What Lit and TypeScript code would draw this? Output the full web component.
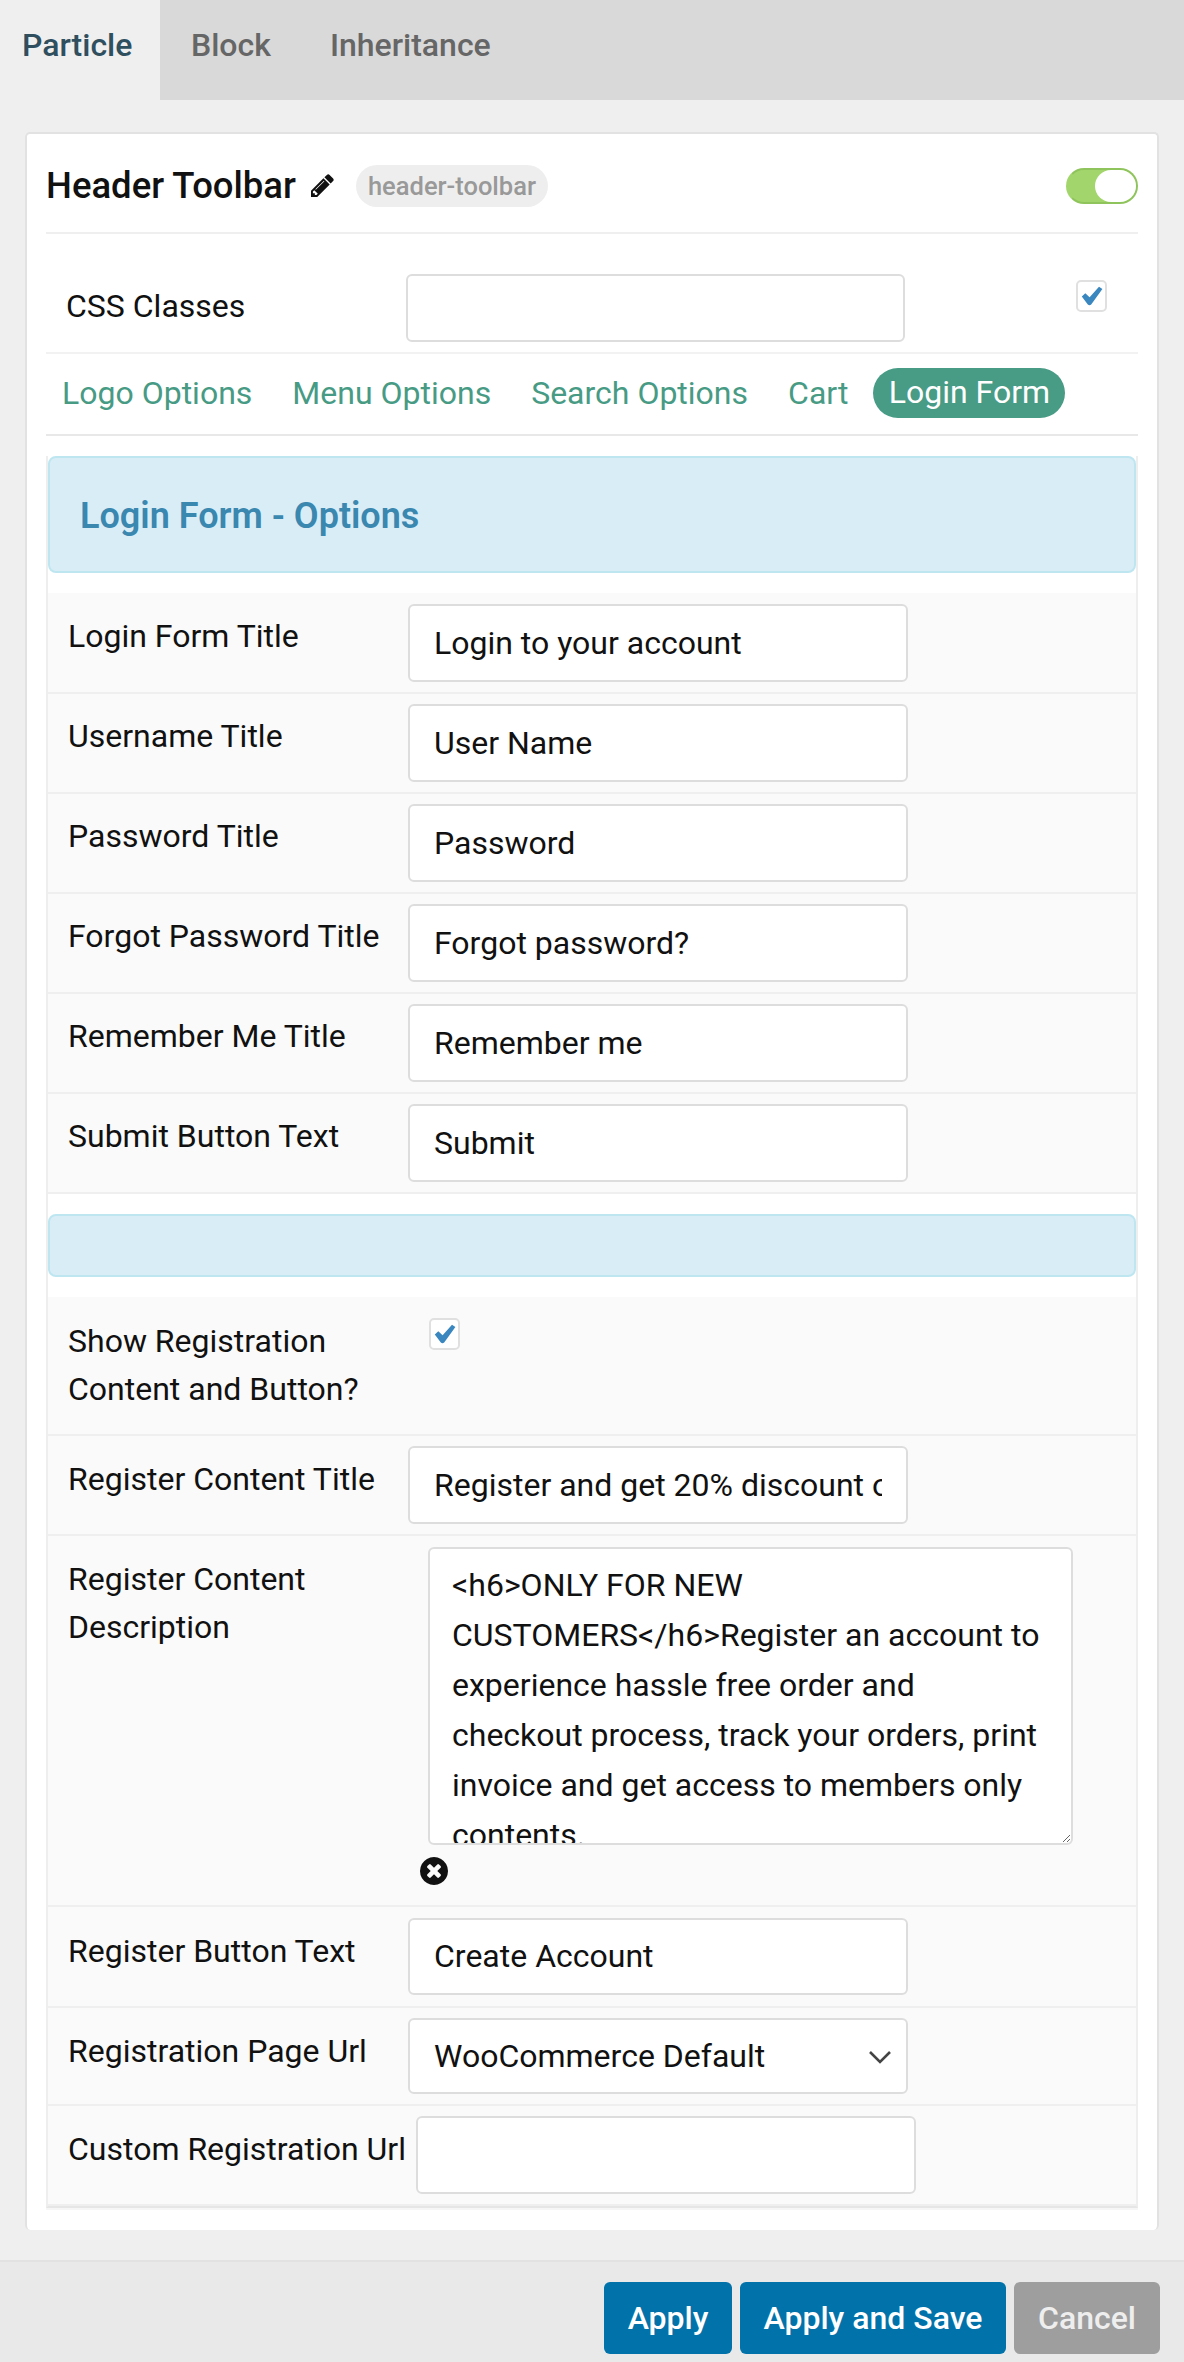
import { LitElement, html, css } from "lit";
import { customElement } from "lit/decorators.js";

const checkIcon = html`<svg class="check" viewBox="0 0 22 20"><path d="M0.8 10.5 L4.3 7.2 L8.6 11.2 L18 0.8 L21.4 3 L10.2 18.4 Q8.4 20 6.8 18.4 Z" fill="#3a87c0"/></svg>`;

const rowsA = [
  ["Login Form Title", "Login to your account"],
  ["Username Title", "User Name"],
  ["Password Title", "Password"],
  ["Forgot Password Title", "Forgot password?"],
  ["Remember Me Title", "Remember me"],
  ["Submit Button Text", "Submit"],
];

@customElement("app-root")
export class AppRoot extends LitElement {
  static styles = css`
    :host {
      display: block;
      width: 1184px;
      height: 2362px;
      background: #efefef;
      font-family: Roboto, "Liberation Sans", sans-serif;
      font-size: 32px;
      color: #111;
      overflow: hidden;
    }
    * { box-sizing: border-box; }
    .tabs {
      display: flex;
      height: 100px;
      background: #d9d9d9;
      font-size: 32px;
      font-weight: 500;
      color: #666;
    }
    .tab { padding: 24px 29px 0; line-height: 42px; }
    .tab.active { background: #efefef; color: #2f4f5f; padding: 24px 22px 0; width: 160px; }
    .tab.second { padding-left: 31px; }
    .tab.third { padding-left: 30px; }
    .card {
      margin: 32px 25px 0;
      height: 2098px;
      background: #fff;
      border: 2px solid #e2e2e2;
      border-bottom: none;
      border-radius: 5px;
      padding: 0 19px;
    }
    .head {
      display: flex;
      align-items: center;
      height: 100px;
      padding-top: 5px;
      border-bottom: 2px solid #efefef;
    }
    .title { font-size: 36.5px; font-weight: 500; color: #111; }
    .pencil { width: 23px; height: 23px; margin: 0 0 0 15px; flex: none; }
    .chip {
      margin-left: 22px;
      height: 42px;
      padding: 0 12px;
      border-radius: 21px;
      background: #eee;
      color: #999;
      font-size: 25.5px;
      font-weight: 500;
      line-height: 42px;
    }
    .toggle {
      margin-left: auto;
      width: 72px;
      height: 36px;
      border-radius: 18px;
      background: #a2d66c;
      border: 2px solid #8fc45c;
      border-left-color: #a2d66c;
      display: flex;
      justify-content: flex-end;
    }
    .knob { width: 41px; height: 32px; border-radius: 16px; background: #fff; }
    .css-row {
      display: flex;
      align-items: flex-start;
      height: 120px;
      border-bottom: 2px solid #f2f2f2;
      padding: 40px 0 0 20px;
    }
    .css-row .lbl { width: 340px; padding-top: 8px; }
    .css-row .field { width: 499px; height: 68px; }
    .cb {
      width: 31px;
      height: 32px;
      border: 2px solid #e0e0e0;
      border-radius: 5px;
      background: #fff;
      display: flex;
      align-items: center;
      justify-content: center;
      flex: none;
    }
    .check { width: 22px; height: 20px; }
    .css-row .cb { margin: 6px 0 0 171px; }
    .subtabs {
      display: flex;
      align-items: center;
      height: 82px;
      border-bottom: 2px solid #e8e8e8;
      color: #479b84;
      font-size: 32px;
      padding: 0 0 2px 16px;
    }
    .subtab { margin-right: 40px; white-space: nowrap; }
    .subtab.cart { margin-right: 25px; }
    .subtab.active {
      background: #489b85;
      color: #fff;
      border-radius: 25px;
      height: 50px;
      line-height: 48px;
      text-align: center;
      margin: 0;
      width: 192px;
    }
    .panel {
      margin-top: 20px;
      border-left: 2px solid #eee;
      border-right: 2px solid #eee;
      border-bottom: 2px solid #e6e6e6;
      box-shadow: 0 2px 0 #f6f6f6;
      height: 1752px;
    }
    .banner {
      height: 117px;
      background: #d9edf7;
      border: 2px solid #bde6f1;
      border-radius: 8px;
      color: #3a87b0;
      font-size: 36px;
      font-weight: 600;
      padding: 2px 30px 0;
      display: flex;
      align-items: center;
    }
    .banner.first { margin: 0 0 20px 0; }
    .banner.empty { height: 63px; margin: 20px 0; }
    .row {
      display: flex;
      align-items: flex-start;
      height: 100px;
      background: #fafafa;
      border-bottom: 2px solid #efefef;
      padding-top: 10px;
    }
    .row.top { height: 101px; padding-top: 11px; }
    .row.short .field { height: 77px; padding-bottom: 2px; }
    .row.sel { height: 98px; }
    .lbl {
      line-height: 48px;
      white-space: nowrap;
    }
    .row .lbl {
      padding: 8px 10px 0 20px;
      min-width: 360px;
    }
    .lower .row .lbl { padding-top: 9px; }
    .field {
      width: 500px;
      height: 78px;
      border: 2px solid #ddd;
      border-radius: 6px;
      background: #fff;
      font: 32px Roboto, "Liberation Sans", sans-serif;
      color: #111;
      padding: 0 24px;
      margin: 0;
      outline: none;
      flex: none;
    }
    .selwrap { position: relative; width: 500px; height: 76px; flex: none; }
    .selwrap .field { appearance: none; -webkit-appearance: none; height: 76px; display: block; }
    .chev { position: absolute; right: 17px; top: 31px; width: 22px; height: 16px; }
    .row.reg { height: 139px; padding-top: 21px; }
    .reg .cb { margin-left: 21px; }
    .lower .reg .lbl { white-space: normal; width: 360px; margin-top: -1px; padding-top: 0; }
    .row.area { height: 371px; padding-top: 11px; }
    .area .lbl { white-space: normal; width: 380px; min-width: 380px; }
    .lower .area .lbl { padding-top: 8px; }
    .areacol { width: 646px; flex: none; position: relative; }
    .areafield {
      display: block;
      width: 645px;
      height: 298px;
      border: 2px solid #ddd;
      border-radius: 6px;
      background: #fff;
      font: 32px/50px Roboto, "Liberation Sans", sans-serif;
      color: #111;
      padding: 11px 22px 0;
      margin: 0;
      outline: none;
      resize: both;
      overflow: hidden;
    }
    .x { position: absolute; left: -8px; top: 310px; width: 28px; height: 28px; }
    .footer {
      height: 102px;
      margin-top: 30px;
      border-top: 2px solid #e2e2e2;
      background: #e9e9e9;
      display: flex;
      justify-content: flex-end;
      gap: 8px;
      padding: 20px 24px 0 0;
    }
    .btn {
      height: 72px;
      border-radius: 6px;
      background: #0273aa;
      color: #fff;
      font-size: 32px;
      font-weight: 500;
      display: flex;
      align-items: center;
      justify-content: center;
    }
    .apply { width: 128px; }
    .save { width: 266px; }
    .btn.cancel { width: 146px; background: #9e9e9e; color: #eee; }
  `;

  private row(label: string, value: string, cls = "") {
    return html`<div class="row ${cls}">
      <div class="lbl">${label}</div>
      <input class="field" .value=${value} />
    </div>`;
  }

  render() {
    return html`
      <div class="tabs">
        <div class="tab active">Particle</div>
        <div class="tab second">Block</div>
        <div class="tab third">Inheritance</div>
      </div>
      <div class="card">
        <div class="head">
          <div class="title">Header Toolbar</div>
          <svg class="pencil" viewBox="128 128 1536 1536"><path fill="#111" d="M491 1536l91-91-235-235-91 91v107h128v128h107zm523-928q0-22-22-22-10 0-17 7l-542 542q-7 7-7 17 0 22 22 22 10 0 17-7l542-542q7-7 7-17zm-54-192l416 416-832 832h-416v-416zm683 96q0 53-37 90l-166 166-416-416 166-165q36-38 90-38 53 0 91 38l235 234q37 39 37 91z"/></svg>
          <div class="chip">header-toolbar</div>
          <div class="toggle"><div class="knob"></div></div>
        </div>
        <div class="css-row">
          <div class="lbl">CSS Classes</div>
          <input class="field" />
          <div class="cb">${checkIcon}</div>
        </div>
        <div class="subtabs">
          <div class="subtab">Logo Options</div>
          <div class="subtab">Menu Options</div>
          <div class="subtab">Search Options</div>
          <div class="subtab cart">Cart</div>
          <div class="subtab active">Login Form</div>
        </div>
        <div class="panel">
          <div class="banner first">Login Form - Options</div>
          ${rowsA.map(([l, v], i) => this.row(l, v, i === 0 ? "top" : ""))}
          <div class="banner empty"></div>
          <div class="lower">
            <div class="row reg">
              <div class="lbl">Show Registration Content and Button?</div>
              <div class="cb">${checkIcon}</div>
            </div>
            ${this.row("Register Content Title", "Register and get 20% discount on your first order")}
            <div class="row area">
              <div class="lbl">Register Content Description</div>
              <div class="areacol">
                <textarea class="areafield" .value=${"<h6>ONLY FOR NEW CUSTOMERS</h6>Register an account to experience hassle free order and checkout process, track your orders, print invoice and get access to members only contents."}></textarea>
                <svg class="x" viewBox="128 128 1536 1536"><path fill="#111" d="M1277 1122q0-26-19-45l-181-181 181-181q19-19 19-45 0-27-19-46l-90-90q-19-19-46-19-26 0-45 19l-181 181-181-181q-19-19-45-19-27 0-46 19l-90 90q-19 19-19 46 0 26 19 45l181 181-181 181q-19 19-19 45 0 27 19 46l90 90q19 19 46 19 26 0 45-19l181-181 181 181q19 19 45 19 27 0 46-19l90-90q19-19 19-46zm387-226q0 209-103 385.5t-279.5 279.5-385.5 103-385.5-103-279.5-279.5-103-385.5 103-385.5 279.5-279.5 385.5-103 385.5 103 279.5 279.5 103 385.5z"/></svg>
              </div>
            </div>
            ${this.row("Register Button Text", "Create Account", "top short")}
            <div class="row sel">
              <div class="lbl">Registration Page Url</div>
              <div class="selwrap">
                <select class="field"><option>WooCommerce Default</option></select>
                <svg class="chev" viewBox="0 0 22 16"><path d="M1 3 L11 13 L21 3" fill="none" stroke="#444" stroke-width="2.6"/></svg>
              </div>
            </div>
            ${this.row("Custom Registration Url", "")}
          </div>
        </div>
      </div>
      <div class="footer">
        <div class="btn apply">Apply</div>
        <div class="btn save">Apply and Save</div>
        <div class="btn cancel">Cancel</div>
      </div>
    `;
  }
}
